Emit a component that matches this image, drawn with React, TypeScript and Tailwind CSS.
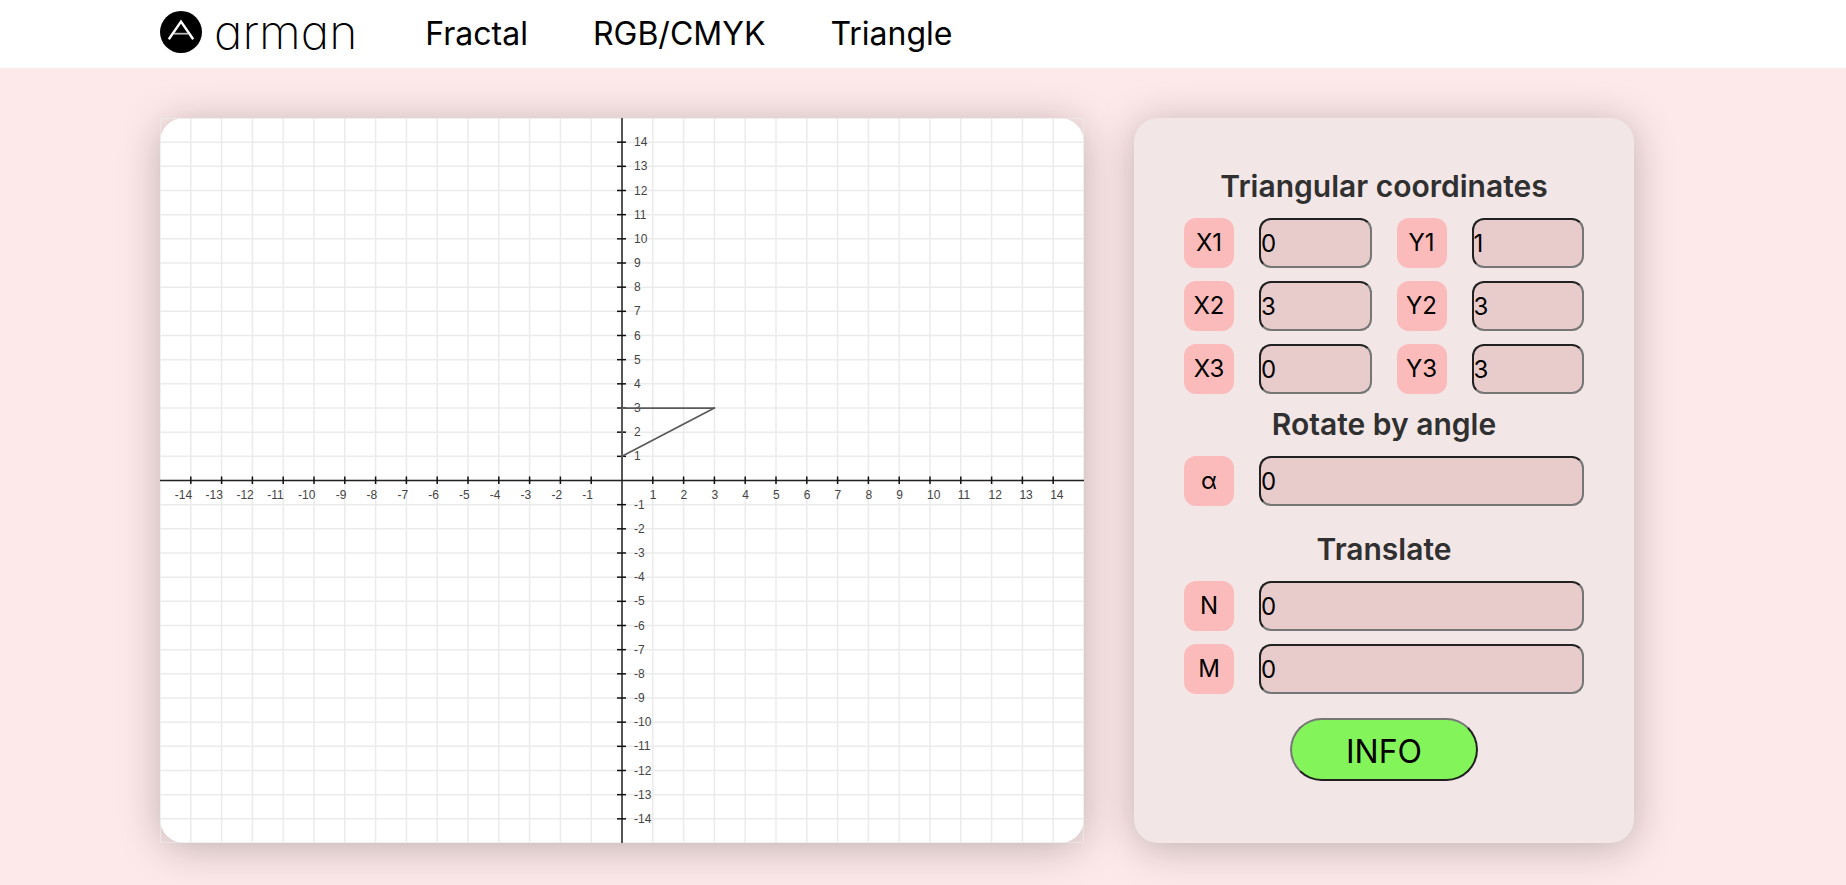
import { useState } from "react";

type FieldKey = "x1" | "y1" | "x2" | "y2" | "x3" | "y3" | "alpha" | "n" | "m";
type Values = Record<FieldKey, string>;

const INITIAL: Values = {
  x1: "0", y1: "1",
  x2: "3", y2: "3",
  x3: "0", y3: "3",
  alpha: "0", n: "0", m: "0",
};

const RANGE = 15;
const gridSteps = Array.from({ length: RANGE * 2 + 1 }, (_, i) => i - RANGE);
const tickSteps = gridSteps.filter((v) => v !== 0 && Math.abs(v) < RANGE);

const px = (x: number) => `${((x + RANGE) / (RANGE * 2)) * 100}%`;
const py = (y: number) => `${((RANGE - y) / (RANGE * 2)) * 100}%`;

function labelShift(v: number) {
  if (v > 0) return -3;
  return v > -10 ? -9 : -16;
}

function transformPoints(v: Values) {
  const angle = (Number(v.alpha) * Math.PI) / 180;
  const cos = Math.cos(angle);
  const sin = Math.sin(angle);
  return [[v.x1, v.y1], [v.x2, v.y2], [v.x3, v.y3]].map(([a, b]) => {
    const x = Number(a);
    const y = Number(b);
    return [x * cos - y * sin + Number(v.n), x * sin + y * cos + Number(v.m)];
  });
}

function Plane({ values }: { values: Values }) {
  const points = transformPoints(values);
  return (
    <svg className="block h-full w-full" role="img" aria-label="Coordinate plane">
      <g stroke="#ebebeb" strokeWidth="1.5">
        {gridSteps.map((v) => (
          <line key={`v${v}`} x1={px(v)} x2={px(v)} y1="0" y2="100%" />
        ))}
        {gridSteps.map((v) => (
          <line key={`h${v}`} x1="0" x2="100%" y1={py(v)} y2={py(v)} />
        ))}
      </g>
      <g stroke="#222" strokeWidth="1.5">
        <line x1="50%" x2="50%" y1="0" y2="100%" />
        <line x1="0" x2="100%" y1="50%" y2="50%" />
      </g>
      {tickSteps.map((v) => (
        <g key={v} stroke="#111" strokeWidth="1.5">
          <svg x={px(v)} y="50%" overflow="visible">
            <line x1="0" x2="0" y1="-4" y2="3.5" />
            <text x={labelShift(v)} y="18" stroke="none" fill="#444" className="font-['Liberation_Sans',sans-serif] text-[12px]">
              {v}
            </text>
          </svg>
          <svg x="50%" y={py(v)} overflow="visible">
            <line x1="-5" x2="4" y1="0" y2="0" />
            <text x="12" y="4" stroke="none" fill="#444" className="font-['Liberation_Sans',sans-serif] text-[12px]">
              {v}
            </text>
          </svg>
        </g>
      ))}
      <g stroke="#5a5a5a" strokeWidth="1.75" strokeLinecap="round">
        {points.map(([x, y], i) => {
          const [nx, ny] = points[(i + 1) % points.length];
          return <line key={i} x1={px(x)} y1={py(y)} x2={px(nx)} y2={py(ny)} />;
        })}
      </g>
    </svg>
  );
}

interface FieldProps {
  id: FieldKey;
  label: string;
  value: string;
  wide?: boolean;
  onChange: (id: FieldKey, value: string) => void;
}

function Field({ id, label, value, wide, onChange }: FieldProps) {
  return (
    <>
      <label htmlFor={id} className="flex h-[50px] items-center justify-center rounded-xl bg-[#fbbbbb] text-2xl text-black">
        {label}
      </label>
      <input
        id={id}
        type="text"
        inputMode="numeric"
        value={value}
        onChange={(e) => onChange(id, e.target.value)}
        className={`h-[50px] w-full min-w-0 rounded-xl border-2 border-[#767676] bg-[#e8cccc] text-2xl text-black [border-style:inset] ${wide ? "col-span-3" : ""}`}
      />
    </>
  );
}

function Heading({ children }: { children: string }) {
  return (
    <h2 className="mb-[13px] text-center text-[30px] leading-[37px] font-semibold text-[#303030]">{children}</h2>
  );
}

export default function App() {
  const [values, setValues] = useState<Values>(INITIAL);
  const update = (id: FieldKey, value: string) => setValues((prev) => ({ ...prev, [id]: value }));
  const field = (id: FieldKey, label: string, wide = false) => (
    <Field id={id} label={label} value={values[id]} wide={wide} onChange={update} />
  );

  return (
    <div className="min-h-screen bg-[#fee9ea] font-[Inter,sans-serif] text-black">
      <header className="flex h-[68px] items-center bg-white pr-10 pl-40">
        <a href="#" className="flex items-center gap-3 pb-1">
          <svg viewBox="0 0 42 42" className="h-[42px] w-[42px]" aria-hidden="true">
            <circle cx="21" cy="21" r="21" fill="#000" />
            <path d="M8.8 28.2 21 10.6 33.2 28.2" fill="none" stroke="#fff" strokeWidth="2.4" strokeLinejoin="miter" />
            <path d="M14 22.7h14" stroke="#bbb" strokeWidth="1.8" />
          </svg>
          <span className="text-[48px] leading-[42px] font-extralight [font-feature-settings:'cv11']">arman</span>
        </a>
        <nav className="ml-[68px] flex gap-[65px] text-[32px] leading-9">
          <a href="#fractal">Fractal</a>
          <a href="#rgb-cmyk">RGB/CMYK</a>
          <a href="#triangle">Triangle</a>
        </nav>
      </header>

      <main className="flex gap-[50px] pt-[50px] pr-[212px] pb-[42px] pl-40">
        <section className="relative min-w-0 flex-1 rounded-3xl bg-white shadow-[0_5px_40px_rgba(0,0,0,0.25)]">
          <div className="absolute inset-0">
            <Plane values={values} />
          </div>
        </section>

        <form
          onSubmit={(e) => e.preventDefault()}
          className="w-[500px] shrink-0 rounded-3xl bg-[#f2e6e6] px-[50px] pt-[50px] pb-[62px] shadow-[0_5px_40px_rgba(0,0,0,0.25)]"
        >
          <Heading>Triangular coordinates</Heading>
          <div className="mb-3 grid grid-cols-[50px_1fr_50px_1fr] gap-x-[25px] gap-y-[13px]">
            {field("x1", "X1")}
            {field("y1", "Y1")}
            {field("x2", "X2")}
            {field("y2", "Y2")}
            {field("x3", "X3")}
            {field("y3", "Y3")}
          </div>
          <Heading>Rotate by angle</Heading>
          <div className="mb-[25px] grid grid-cols-[50px_1fr_50px_1fr] gap-x-[25px]">
            {field("alpha", "α", true)}
          </div>
          <Heading>Translate</Heading>
          <div className="mb-6 grid grid-cols-[50px_1fr_50px_1fr] gap-x-[25px] gap-y-[13px]">
            {field("n", "N", true)}
            {field("m", "M", true)}
          </div>
          <button
            type="button"
            className="mx-auto block h-[63px] w-[188px] rounded-full border-2 border-[#767676] bg-[#83f55a] pt-1 text-[32px] text-black [border-style:outset]"
          >
            INFO
          </button>
        </form>
      </main>
    </div>
  );
}
